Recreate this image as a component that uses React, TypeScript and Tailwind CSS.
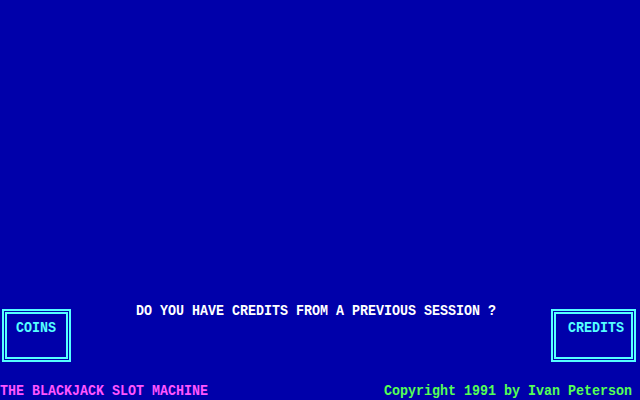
import React from 'react';

const dos = { fontFamily: '"Liberation Mono", "DejaVu Sans Mono", monospace' };

function FrameButton({ label, width, pad }: { label: string; width: string; pad: string }) {
  return (
    <div className={`${width} h-[53px] border-2 border-[#55FFFF] p-px`}>
      <div className={`h-full w-full border-2 border-[#55FFFF] ${pad} pt-[2px]`}>
        <span className="text-[13.33px] leading-[14px] font-bold text-[#55FFFF] inline-block scale-y-[1.15]">{label}</span>
      </div>
    </div>
  );
}

export default function App() {
  return (
    <div className="w-[640px] h-[400px] bg-[#0000AA] flex flex-col overflow-hidden select-none" style={dos}>
      <div className="flex-1" />
      <div className="flex items-start pl-[2px] pr-[4px]">
        <FrameButton label="COINS" width="w-[69px]" pad="pl-[9px]" />
        <p className="ml-[65px] -mt-[4px] text-[13.33px] leading-[14px] font-bold text-white whitespace-pre scale-y-[1.15]">
          DO YOU HAVE CREDITS FROM A PREVIOUS SESSION ?
        </p>
        <div className="ml-auto">
          <FrameButton label="CREDITS" width="w-[85px]" pad="pl-[12px]" />
        </div>
      </div>
      <div className="flex justify-between items-end pr-[8px] mt-[23px] mb-[1px] text-[13.33px] leading-[14px] font-bold whitespace-pre">
        <span className="text-[#FF55FF] inline-block scale-y-[1.15]">THE BLACKJACK SLOT MACHINE</span>
        <span className="text-[#55FF55] inline-block scale-y-[1.15]">Copyright 1991 by Ivan Peterson</span>
      </div>
    </div>
  );
}
